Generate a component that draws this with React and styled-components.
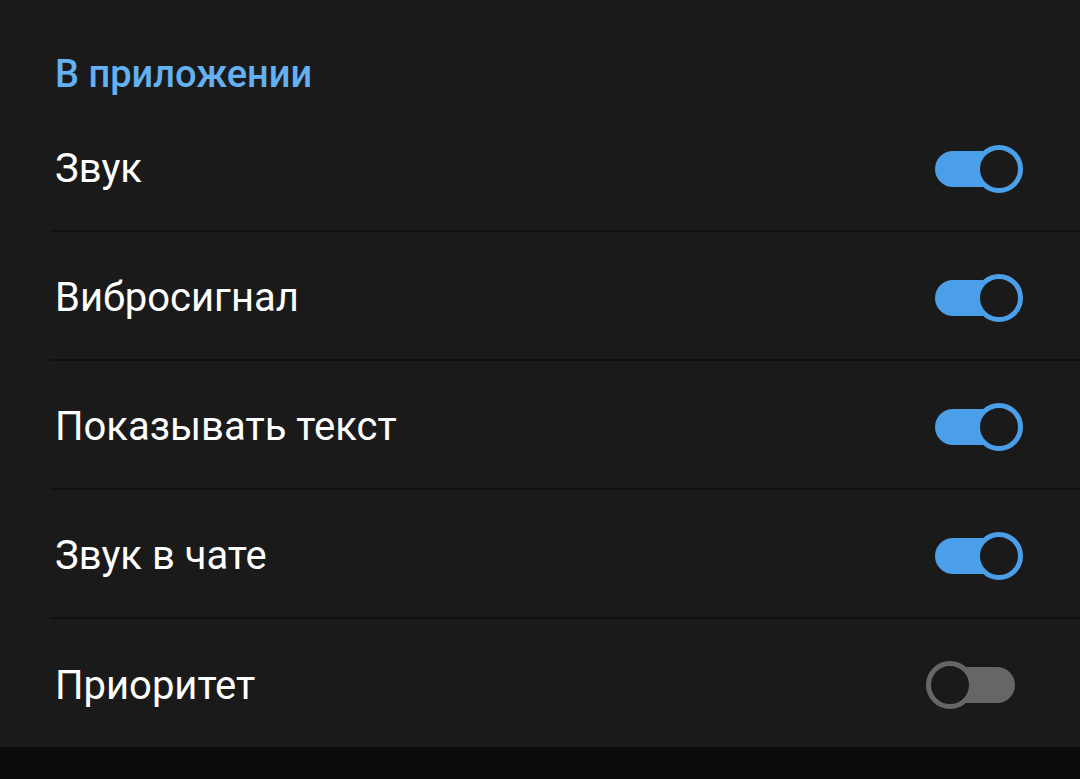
import React, { useState } from "react";
import styled, { createGlobalStyle } from "styled-components";

const GlobalStyle = createGlobalStyle`
	html, body {
		margin: 0;
		padding: 0;
		background-color: #0b0b0b;
	}
	* {
		box-sizing: border-box;
	}
`;

const items = [
	{ id: "sound", label: "Звук", on: true },
	{ id: "vibro", label: "Вибросигнал", on: true },
	{ id: "text", label: "Показывать текст", on: true },
	{ id: "chat", label: "Звук в чате", on: true },
	{ id: "priority", label: "Приоритет", on: false },
];

function App() {
	const [state, setState] = useState(
		Object.fromEntries(items.map((i) => [i.id, i.on]))
	);

	const toggle = (id) => setState((s) => ({ ...s, [id]: !s[id] }));

	return (
		<>
			<GlobalStyle />
			<Screen>
				<Section>
					<Title>В приложении</Title>
					{items.map((item, idx) => (
						<Row key={item.id} last={idx === items.length - 1}>
							<Label>{item.label}</Label>
							<Switch
								type="button"
								on={state[item.id]}
								onClick={() => toggle(item.id)}
							>
								<Track on={state[item.id]} />
								<Thumb on={state[item.id]} />
							</Switch>
						</Row>
					))}
				</Section>
				<Bottom />
			</Screen>
		</>
	);
}

const Screen = styled.div`
	display: flex;
	flex-direction: column;
	width: 100%;
	height: 100vh;
	background-color: #0b0b0b;
	font-family: Roboto, "Liberation Sans", sans-serif;
`;

const Section = styled.div`
	display: flex;
	flex-direction: column;
	background-color: #1a1a1a;
	padding-left: 50px;
`;

const Title = styled.div`
	height: 103px;
	display: flex;
	align-items: center;
	padding: 45px 0 0 5px;
	font-size: 38px;
	font-weight: 500;
	color: #63b0f3;
`;

const Row = styled.div`
	height: ${(p) => (p.last ? "128px" : "129px")};
	display: flex;
	align-items: center;
	justify-content: space-between;
	padding: 4px 57px 0 5px;
	border-bottom: ${(p) => (p.last ? "none" : "2px solid #101010")};
`;

const Label = styled.span`
	font-size: 40px;
	color: #ffffff;
`;

const Switch = styled.button`
	position: relative;
	width: 97px;
	height: 50px;
	padding: 0;
	border: none;
	background: none;
	cursor: pointer;
`;

const Track = styled.span`
	position: absolute;
	left: 9px;
	top: 7px;
	width: 80px;
	height: 36px;
	border-radius: 18px;
	background-color: ${(p) => (p.on ? "#4a9fe8" : "#666666")};
`;

const Thumb = styled.span`
	position: absolute;
	top: 1px;
	left: ${(p) => (p.on ? "49px" : "0px")};
	width: 48px;
	height: 48px;
	border-radius: 50%;
	border: 5px solid ${(p) => (p.on ? "#4a9fe8" : "#666666")};
	background-color: #1a1a1a;
`;

const Bottom = styled.div`
	flex: 1;
	background-color: #0b0b0b;
`;

export default App;
